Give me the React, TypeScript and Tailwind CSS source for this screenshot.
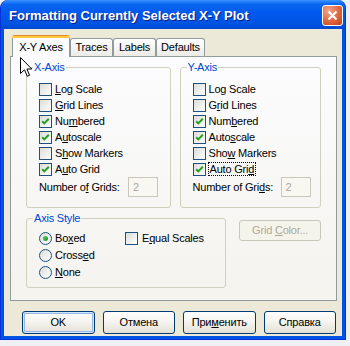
import type { ReactNode } from 'react';

function Check({ checked }: { checked?: boolean }) {
  return (
    <span className="flex h-[13px] w-[13px] shrink-0 items-center justify-center border border-[#1c5180] bg-linear-to-br from-[#dcdcd7] to-white">
      {checked && (
        <svg width="11" height="11" viewBox="0 0 11 11">
          <path d="M2.2 5.2 L4.3 7.4 L8.8 2.8" fill="none" stroke="#21a121" strokeWidth="2" />
        </svg>
      )}
    </span>
  );
}

function Radio({ checked }: { checked?: boolean }) {
  return (
    <span className="flex h-[13px] w-[13px] shrink-0 items-center justify-center rounded-full border border-[#1c5180] bg-linear-to-br from-[#dcdcd7] to-white">
      {checked && (
        <span className="h-[5px] w-[5px] rounded-full bg-linear-to-br from-[#55d35a] to-[#1d8f1d]" />
      )}
    </span>
  );
}

function CheckRow({ checked, children }: { checked?: boolean; children: ReactNode }) {
  return (
    <div className="flex h-[16px] items-center gap-[3px]">
      <Check checked={checked} />
      <span className="whitespace-nowrap">{children}</span>
    </div>
  );
}

function RadioRow({ checked, children }: { checked?: boolean; children: ReactNode }) {
  return (
    <div className="flex h-[17px] items-center gap-[3px]">
      <Radio checked={checked} />
      <span className="whitespace-nowrap">{children}</span>
    </div>
  );
}

function Group({ title, className, children }: { title: string; className: string; children: ReactNode }) {
  return (
    <fieldset className={`rounded-[3px] border border-[#d0d0bf] ${className}`}>
      <legend className="ml-[6px] px-[1px] leading-[13px] text-[#0046d5]">{title}</legend>
      {children}
    </fieldset>
  );
}

function Grids({ label, gap }: { label: ReactNode; gap: string }) {
  return (
    <div className="flex h-[20px] items-center">
      <span className={`whitespace-nowrap ${gap}`}>{label}</span>
      <div className="flex h-[20px] w-[30px] items-center border border-[#c9c7ba] bg-[#f8f7f2] pl-[4px] text-[#aca899]">
        2
      </div>
    </div>
  );
}

function PushButton({ children, isDefault }: { children: ReactNode; isDefault?: boolean }) {
  return (
    <button
      type="button"
      className={`flex h-[23px] w-[73px] items-center justify-center rounded-[3px] border border-[#003c74] bg-linear-to-b from-white via-[#f4f3ee] to-[#e3e1d6] ${
        isDefault ? 'shadow-[inset_0_0_0_1px_#cee7ff,inset_0_0_0_2px_#98b8ea]' : ''
      }`}
    >
      <span>{children}</span>
    </button>
  );
}

export default function App() {
  return (
    <div className="relative h-[346px] w-[350px] bg-[#eef0f3] font-['Liberation_Sans',Arial,sans-serif] text-[11px] leading-[13px] tracking-[-0.2px] text-black">
      <div className="flex h-[340px] w-[346px] flex-col overflow-hidden rounded-t-[8px] border-x border-b border-[#0831d9] bg-[#0054e3]">
        <div className="flex h-[29px] shrink-0 items-start bg-[linear-gradient(to_bottom,#3d95ff_0%,#0a66f0_14%,#0058ee_45%,#0054e3_80%,#0048d0_100%)] pl-[8px] pr-[2px]">
          <span className="mt-[8px] whitespace-nowrap text-[13px] leading-[15px] font-bold tracking-normal text-white [text-shadow:1px_1px_0_#0a1e82]">
            Formatting Currently Selected X-Y Plot
          </span>
          <div className="mt-[5px] ml-auto flex h-[21px] w-[21px] items-center justify-center rounded-[3px] border border-white bg-[radial-gradient(circle_at_30%_25%,#f0a58c,#e0653f_55%,#c2401c)]">
            <svg width="11" height="11" viewBox="0 0 11 11">
              <path d="M1.5 1.5 L9.5 9.5 M9.5 1.5 L1.5 9.5" stroke="white" strokeWidth="2.2" />
            </svg>
          </div>
        </div>

        <div className="mx-[3px] mb-[3px] flex-1 bg-[#ece9d8] px-[6px] pt-[6px]">
          <div className="flex h-[21px] items-end pl-[2px]">
            <div className="relative z-10 -mb-px flex h-[22px] w-[58px] flex-col">
              <div className="h-[3px] rounded-t-[3px] bg-[linear-gradient(to_bottom,#e68b2c_0_1px,#ffc83c_1px)]" />
              <div className="flex flex-1 items-center justify-center border-x border-[#919b9c] bg-[#fcfcfe]">
                X-Y Axes
              </div>
            </div>
            {[
              ['Traces', 'w-[43px]'],
              ['Labels', 'w-[43px]'],
              ['Defaults', 'w-[49px]'],
            ].map(([name, w]) => (
              <div
                key={name}
                className={`flex h-[18px] items-center justify-center rounded-t-[3px] border border-b-0 border-[#919b9c] bg-linear-to-b from-white to-[#ecebe6] ${w}`}
              >
                {name}
              </div>
            ))}
          </div>

          <div className="h-[245px] w-[327px] border border-[#919b9c] bg-linear-to-b from-[#fcfcfe] to-[#f4f3ee] px-[15px] pt-[4px]">
            <div className="flex gap-[9px]">
              <Group title="X-Axis" className="w-[145px]">
                <div className="pt-[7px] pb-[10px] pl-[12px]">
                  <CheckRow><u>L</u>og Scale</CheckRow>
                  <CheckRow><u>G</u>rid Lines</CheckRow>
                  <CheckRow checked>Nu<u>m</u>bered</CheckRow>
                  <CheckRow checked>A<u>u</u>toscale</CheckRow>
                  <CheckRow>S<u>h</u>ow Markers</CheckRow>
                  <CheckRow checked>A<u>u</u>to Grid</CheckRow>
                  <Grids gap="w-[89px]" label={<>Number o<u>f</u> Grids:</>} />
                </div>
              </Group>
              <Group title="Y-Axis" className="w-[142px]">
                <div className="pt-[7px] pb-[10px] pl-[12px]">
                  <CheckRow>Lo<u>g</u> Scale</CheckRow>
                  <CheckRow>G<u>r</u>id Lines</CheckRow>
                  <CheckRow checked>Num<u>b</u>ered</CheckRow>
                  <CheckRow checked>Auto<u>s</u>cale</CheckRow>
                  <CheckRow>Sho<u>w</u> Markers</CheckRow>
                  <div className="flex h-[16px] items-center gap-[3px]">
                    <Check checked />
                    <span className="-ml-px border border-dotted border-black px-px leading-[12px]">
                      Auto Gri<u>d</u>
                    </span>
                  </div>
                  <Grids gap="w-[88px]" label={<>Number of Gri<u>d</u>s:</>} />
                </div>
              </Group>
            </div>

            <div className="mt-[4px] flex items-start">
              <Group title="Axis Style" className="w-[201px]">
                <div className="flex pt-[5px] pb-[6px] pl-[12px]">
                  <div className="w-[86px]">
                    <RadioRow checked>Bo<u>x</u>ed</RadioRow>
                    <RadioRow>Cross<u>e</u>d</RadioRow>
                    <RadioRow><u>N</u>one</RadioRow>
                  </div>
                  <div className="flex h-[17px] items-center gap-[4px]">
                    <Check />
                    <span className="whitespace-nowrap">E<u>q</u>ual Scales</span>
                  </div>
                </div>
              </Group>
              <button
                type="button"
                className="mt-[8px] ml-[13px] flex h-[21px] w-[82px] items-center justify-center rounded-[3px] border border-[#c9c7ba] bg-[#f5f4ea] text-[#aca899]"
              >
                <span className="whitespace-nowrap">
                  Grid <u>C</u>olor...
                </span>
              </button>
            </div>
          </div>

          <div className="mt-[10px] flex gap-[8px] pl-[12px]">
            <PushButton isDefault>OK</PushButton>
            <PushButton>Отмена</PushButton>
            <PushButton>При<u>м</u>енить</PushButton>
            <PushButton>Справка</PushButton>
          </div>
        </div>
      </div>

      <svg className="absolute top-[57px] left-[20px]" width="13" height="21" viewBox="0 0 13 21">
        <path
          d="M0.5 0.5 L0.5 16.5 L4.5 12.8 L7.3 19.3 L9.6 18.3 L6.9 12 L11.8 12 Z"
          fill="white"
          stroke="black"
          strokeWidth="1"
          strokeLinejoin="miter"
        />
      </svg>
    </div>
  );
}
